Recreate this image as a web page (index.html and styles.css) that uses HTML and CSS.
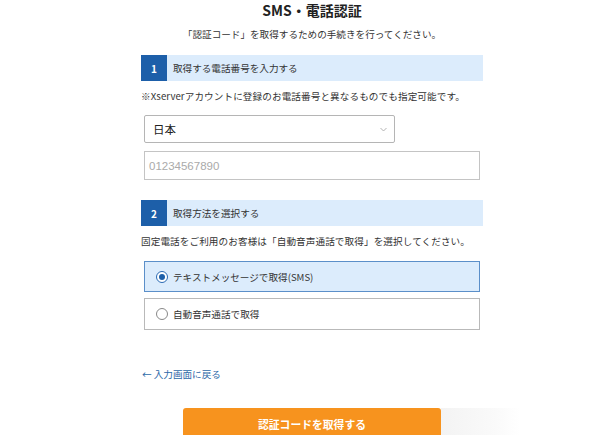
FILE: index.html
```html
<!DOCTYPE html>
<html lang="ja">
<head>
    <meta charset="UTF-8">
    <meta name="viewport" content="width=device-width, initial-scale=1.0">
    <title>SMS・電話認証</title>
    <link rel="stylesheet" href="styles.css">
</head>
<body>
    <div class="wrap">
        <h1 class="title">SMS・電話認証</h1>
        <p class="lead">「認証コード」を取得するための手続きを行ってください。</p>

        <div class="step">
            <span class="step-num">1</span>
            <span class="step-label">取得する電話番号を入力する</span>
        </div>
        <p class="note">※Xserverアカウントに登録のお電話番号と異なるものでも指定可能です。</p>

        <div class="select">
            <span>日本</span>
            <svg class="chevron" width="7" height="5" viewBox="0 0 7 5"><path d="M0.5 1 L3.5 4 L6.5 1" fill="none" stroke="#aaa" stroke-width="0.9"/></svg>
        </div>
        <div class="input"><span class="placeholder">01234567890</span></div>

        <div class="step step-2">
            <span class="step-num">2</span>
            <span class="step-label">取得方法を選択する</span>
        </div>
        <p class="note">固定電話をご利用のお客様は「自動音声通話で取得」を選択してください。</p>

        <div class="radio selected">
            <span class="dot"></span>
            <span>テキストメッセージで取得(SMS)</span>
        </div>
        <div class="radio">
            <span class="dot"></span>
            <span>自動音声通話で取得</span>
        </div>

        <a class="back" href="#">← 入力画面に戻る</a>

        <div class="actions">
            <button class="submit">認証コードを取得する</button>
            <div class="shade"></div>
        </div>
    </div>
</body>
</html>
```

FILE: styles.css
```css
body {
    margin: 0;
    padding-left: 24px;
    background: #fff;
    color: #333;
    font-family: "Noto Sans CJK JP", "Noto Sans", sans-serif;
    font-size: 9.6px;
    overflow: hidden;
}

.wrap {
    width: 342px;
    margin: 0 auto;
    display: flex;
    flex-direction: column;
}

.title {
    margin: 0;
    font-size: 14px;
    line-height: 21px;
    font-weight: 700;
    text-align: center;
    color: #222;
}

.lead {
    margin: 5px 0 0;
    line-height: 16px;
    text-align: center;
}

.step {
    margin-top: 13px;
    height: 26px;
    display: flex;
    align-items: center;
    background: #dcecfc;
}

.step-2 {
    margin-top: 20px;
}

.step-num {
    width: 26px;
    height: 26px;
    display: flex;
    align-items: center;
    justify-content: center;
    background: #1d5fa9;
    color: #fff;
    font-weight: 700;
    font-size: 10px;
}

.step-label {
    margin-left: 6px;
}

.note {
    margin: 7px 0 0;
    line-height: 16px;
    letter-spacing: 0.1px;
}

.select {
    margin: 11px 0 0 3px;
    width: 251px;
    height: 28px;
    box-sizing: border-box;
    border: 1px solid #b5b5b5;
    border-radius: 2px;
    display: flex;
    align-items: center;
    justify-content: space-between;
    padding: 0 7px 0 8px;
    font-size: 11.5px;
    color: #222;
}

.input {
    margin: 8px 0 0 3px;
    width: 336px;
    height: 29px;
    box-sizing: border-box;
    border: 1px solid #c4c4c4;
    display: flex;
    align-items: center;
    padding-left: 4px;
    font-size: 11.5px;
}

.placeholder {
    color: #aaa;
    font-family: "Liberation Sans", "Noto Sans", sans-serif;
}

.radio {
    margin: 6px 0 0 3px;
    width: 336px;
    height: 32px;
    box-sizing: border-box;
    border: 1px solid #b9b9b9;
    display: flex;
    align-items: center;
    padding-left: 11px;
    gap: 5px;
}

.radio.selected {
    margin-top: 12px;
    height: 31px;
    background: #dcecfc;
    border-color: #5b8fc9;
}

.dot {
    width: 12px;
    height: 12px;
    box-sizing: border-box;
    border: 1px solid #888;
    border-radius: 50%;
    background: #fff;
    display: flex;
    align-items: center;
    justify-content: center;
}

.radio.selected .dot {
    border-color: #2a6ab4;
}

.radio.selected .dot::after {
    content: "";
    width: 6px;
    height: 6px;
    border-radius: 50%;
    background: #1d5fa9;
}

.back {
    margin-top: 36px;
    line-height: 16px;
    color: #2c68a8;
    text-decoration: none;
    align-self: flex-start;
    margin-left: 1px;
}

.actions {
    margin-top: 26px;
    display: flex;
    margin-left: 42px;
}

.submit {
    flex-shrink: 0;
    width: 258px;
    height: 36px;
    border: none;
    border-radius: 3px;
    background: #f7931e;
    color: #fff;
    font-family: inherit;
    font-size: 10.8px;
    font-weight: 700;
    padding-bottom: 6px;
}

.shade {
    flex-shrink: 0;
    width: 79px;
    height: 36px;
    background: linear-gradient(to right, #f3f3f3, #fafafa 70%, #fff);
}
```
